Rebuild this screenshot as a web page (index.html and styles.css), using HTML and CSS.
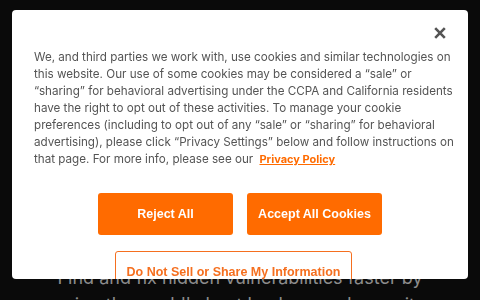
FILE: index.html
```html
<!DOCTYPE html>
<html lang="en">
<head>
<meta charset="utf-8">
<title>Cookie consent</title>
<link rel="stylesheet" href="styles.css">
</head>
<body>
<main class="hero">
  <p class="hero-text">Find and fix hidden vulnerabilities faster by<br>using the world's best hackers and security</p>
</main>
<div class="overlay">
  <section class="modal" role="dialog" aria-label="Privacy">
    <div class="modal-head">
      <button class="close" aria-label="Close">
        <svg width="12" height="12" viewBox="0 0 12 12"><path d="M1.2 1.2 L10.8 10.8 M10.8 1.2 L1.2 10.8" stroke="#555" stroke-width="2.6" stroke-linecap="butt"/></svg>
      </button>
    </div>
    <p class="notice">We, and third parties we work with, use cookies and similar technologies on<br>this website. Our use of some cookies may be considered a “sale” or<br>“sharing” for behavioral advertising under the CCPA and California residents<br>have the right to opt out of these activities. To manage your cookie<br>preferences (including to opt out of any “sale” or “sharing” for behavioral<br>advertising), please click “Privacy Settings” below and follow instructions on<br>that page. For more info, please see our <a class="policy" href="#">Privacy Policy</a></p>
    <div class="actions">
      <button class="btn btn-solid">Reject All</button>
      <button class="btn btn-solid">Accept All Cookies</button>
    </div>
    <div class="actions second">
      <button class="btn btn-outline">Do Not Sell or Share My Information</button>
    </div>
  </section>
</div>
</body>
</html>
```

FILE: styles.css
```css
html, body {
  margin: 0;
  padding: 0;
  background: #0a0a0a;
  height: 100%;
  overflow: hidden;
}

.hero {
  display: flex;
  justify-content: center;
  padding-top: 264px;
}

.hero-text {
  margin: 0;
  font-family: Inter, "Liberation Sans", sans-serif;
  font-size: 18px;
  line-height: 27px;
  color: #8c8c8c;
  text-align: center;
}

.overlay {
  position: fixed;
  inset: 0;
  z-index: 10;
}

.modal {
  position: absolute;
  top: 10px;
  left: 12px;
  width: 456px;
  height: 269px;
  box-sizing: border-box;
  padding: 17px 22px 0 22px;
  background: #ffffff;
  border-radius: 4px;
  overflow: hidden;
}

.modal-head {
  display: flex;
  justify-content: flex-end;
  height: 12px;
}

.close {
  border: 0;
  padding: 0;
  margin: 0;
  background: none;
  width: 12px;
  height: 12px;
  display: block;
}

.close svg {
  display: block;
}

.notice {
  margin: 10px -12px 0 0;
  font-family: Inter, "Liberation Sans", sans-serif;
  font-size: 11.65px;
  line-height: 17px;
  color: #555555;
}

.policy {
  margin-left: 3px;
  font-size: 11px;
  color: #ff6b00;
  font-weight: 700;
  text-decoration: underline;
}

.actions {
  display: flex;
  justify-content: center;
  gap: 14px;
  margin-top: 25px;
}

.actions.second {
  margin-top: 16px;
}

.btn {
  font-family: "Liberation Sans", Arial, sans-serif;
  font-weight: 700;
  font-size: 12.5px;
  height: 42px;
  border-radius: 3px;
  padding: 0;
  cursor: pointer;
}

.btn-solid {
  width: 135px;
  background: #ff6b00;
  color: #ffffff;
  border: 0;
}

.btn-outline {
  width: 237px;
  margin-right: 13px;
  background: #ffffff;
  color: #f56f1f;
  border: 1px solid #f56f1f;
}
```
